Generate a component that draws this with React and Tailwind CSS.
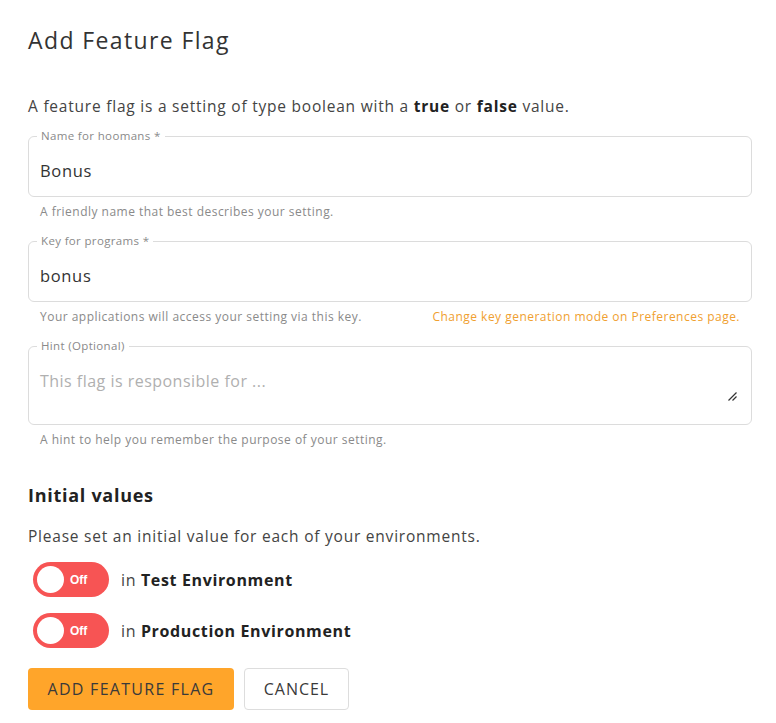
import React from "react";

function Field({ label, value, placeholder, textarea, helper, link }) {
  return (
    <div className="flex flex-col">
      <fieldset className={`border border-[#dcdcdc] rounded-[6px] pl-[8px] pr-[14px] ${textarea ? "h-[86px]" : "h-[68px]"} flex flex-col`}>
        <legend className="px-[4px] text-[11.5px] leading-[14px] text-[#8a8a8a] tracking-[0.03em]">{label}</legend>
        {textarea ? (
          <>
            <div className="pt-[18px] pl-[3px] text-[16px] leading-[20px] text-[#b0b0b0] tracking-[0.03em]">{placeholder}</div>
            <div className="mt-auto mb-[13px] self-end">
              <svg width="10" height="10" viewBox="0 0 10 10" className="block">
                <path d="M9.5 1.5 L1.5 9.5 M9.5 5.5 L5.5 9.5" stroke="#333" strokeWidth="1.2" fill="none" />
              </svg>
            </div>
          </>
        ) : (
          <div className="pt-[18px] pl-[3px] text-[16.5px] leading-[20px] text-[#333] tracking-[0.04em]">{value}</div>
        )}
      </fieldset>
      <div className="flex justify-between pl-[12px] pr-[12px] mt-[8px] text-[12px] leading-[14px] text-[#8a8a8a] tracking-[0.04em]">
        <span>{helper}</span>
        {link && <span className="text-[#f0a030]">{link}</span>}
      </div>
    </div>
  );
}

function Toggle({ env }) {
  return (
    <div className="flex items-center gap-[12px] pl-[5px]">
      <div className="w-[76px] h-[35px] rounded-full bg-[#f75454] flex items-center pl-[4px] gap-[6px]">
        <div className="w-[27px] h-[27px] rounded-full bg-white" />
        <span className="text-white text-[12px] font-semibold" style={{ fontFamily: "'Liberation Sans', Arial, sans-serif" }}>Off</span>
      </div>
      <span className="text-[16px] leading-[20px] text-[#444] tracking-[0.04em]">
        in <b className="font-bold text-[#222]">{env}</b>
      </span>
    </div>
  );
}

export default function App() {
  return (
    <div className="bg-white w-[776px] h-[723px] pl-[28px] pr-[24px] pt-[26px]" style={{ fontFamily: "'Open Sans', sans-serif" }}>
      <h1 className="text-[23px] leading-[28px] text-[#333] font-normal tracking-[0.06em]">Add Feature Flag</h1>
      <p className="mt-[42px] text-[15.5px] leading-[20px] text-[#444] tracking-[0.05em]">
        A feature flag is a setting of type boolean with a <b className="font-bold text-[#222]">true</b> or <b className="font-bold text-[#222]">false</b> value.
      </p>
      <div className="mt-[13px] flex flex-col gap-[15px]">
        <Field label="Name for hoomans *" value="Bonus" helper="A friendly name that best describes your setting." />
        <Field label="Key for programs *" value="bonus" helper="Your applications will access your setting via this key." link="Change key generation mode on Preferences page." />
        <Field label="Hint (Optional)" textarea placeholder="This flag is responsible for ..." helper="A hint to help you remember the purpose of your setting." />
      </div>
      <h2 className="mt-[36px] text-[18px] leading-[24px] font-bold text-[#222] tracking-[0.04em]">Initial values</h2>
      <p className="mt-[19px] text-[15.5px] leading-[20px] text-[#444] tracking-[0.05em]">Please set an initial value for each of your environments.</p>
      <div className="mt-[16px] flex flex-col gap-[16px]">
        <Toggle env="Test Environment" />
        <Toggle env="Production Environment" />
      </div>
      <div className="mt-[20px] flex gap-[10px]">
        <button className="h-[42px] w-[206px] rounded-[4px] bg-[#ffa52a] text-[16px] text-[#3a3a3a] tracking-[0.08em]">ADD FEATURE FLAG</button>
        <button className="h-[42px] w-[105px] rounded-[4px] border border-[#ddd] bg-white text-[16px] text-[#3a3a3a] tracking-[0.06em]">CANCEL</button>
      </div>
    </div>
  );
}
